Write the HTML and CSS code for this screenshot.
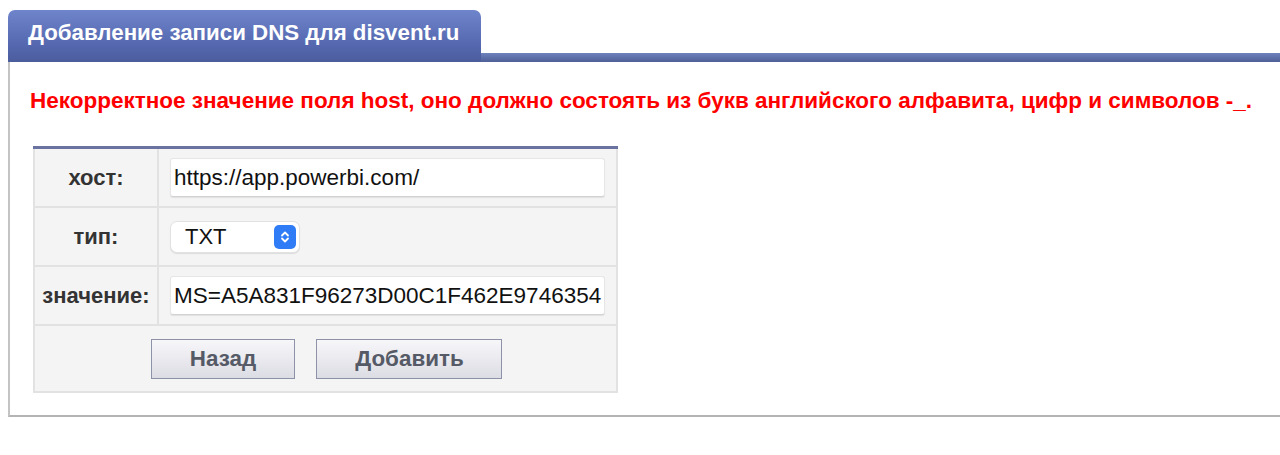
FILE: index.html
```html
<!DOCTYPE html>
<html lang="ru">
<head>
<meta charset="utf-8">
<title>Добавление записи DNS</title>
<link rel="stylesheet" href="styles.css">
</head>
<body>
<div class="tabs">
  <div class="tab">Добавление записи DNS для disvent.ru</div>
  <div class="tabline"></div>
</div>
<div class="panel">
  <p class="error">Некорректное значение поля host, оно должно состоять из букв английского алфавита, цифр и символов -_.</p>
  <table class="form">
    <tr>
      <th>хост:</th>
      <td><div class="input">https://app.powerbi.com/</div></td>
    </tr>
    <tr>
      <th>тип:</th>
      <td>
        <div class="select">
          <span>TXT</span>
          <span class="stepper">
            <svg width="12" height="16" viewBox="0 0 12 16"><path d="M3 6.5 L6 3.5 L9 6.5 M3 9.5 L6 12.5 L9 9.5" fill="none" stroke="#fff" stroke-width="1.8" stroke-linecap="round" stroke-linejoin="round"/></svg>
          </span>
        </div>
      </td>
    </tr>
    <tr>
      <th>значение:</th>
      <td><div class="input">MS=A5A831F96273D00C1F462E9746354</div></td>
    </tr>
    <tr>
      <td colspan="2" class="buttons">
        <button class="btn back">Назад</button>
        <button class="btn add">Добавить</button>
      </td>
    </tr>
  </table>
</div>
</body>
</html>
```
FILE: styles.css
```css
html, body {
  background: #fff;
}
body {
  margin: 10px 0 0 8px;
  font-family: "Liberation Sans", Arial, sans-serif;
  overflow: hidden;
}
.tabs {
  display: flex;
  align-items: flex-end;
}
.tab {
  height: 52px;
  box-sizing: border-box;
  padding: 10px 22px 0 20px;
  border-radius: 7px 7px 0 0;
  background: linear-gradient(#6e84cb, #5467ae 70%, #4b5d9c);
  color: #fff;
  font-weight: bold;
  font-size: 22.3px;
  white-space: nowrap;
}
.tabline {
  flex: 1;
  height: 9px;
  background: linear-gradient(#6f82bd, #4f5f97);
}
.panel {
  border-left: 2px solid #c4c4c4;
  border-bottom: 2px solid #b4b4b4;
  height: 355px;
  box-sizing: border-box;
  padding: 26px 0 0 20px;
}
.error {
  margin: 0 0 32px 0;
  color: #f00;
  font-weight: bold;
  font-size: 22.5px;
  line-height: 26px;
  white-space: nowrap;
}
.form {
  border-collapse: collapse;
  table-layout: fixed;
  width: 585px;
  margin-left: 3px;
  background: #f4f4f4;
  border-top: 3px solid #6a73a0;
  border-left: 1px solid #d6d6d6;
  border-right: 1px solid #d6d6d6;
  border-bottom: 1px solid #d6d6d6;
}
.form th, .form td {
  border: 2px solid #e2e2e2;
  padding: 0;
  height: 57px;
}
.form th {
  width: 122px;
  font-size: 22px;
  font-weight: bold;
  color: #333;
  text-align: center;
}
.form td {
  padding: 0 11px;
}
.input {
  height: 39px;
  box-sizing: border-box;
  background: #fff;
  border: 1px solid #e6e6e6;
  border-bottom-color: #d2d2d2;
  border-radius: 3px;
  box-shadow: 0 1px 1px rgba(0,0,0,0.08);
  font-family: Helvetica, "Liberation Sans", Arial, sans-serif;
  font-size: 22.5px;
  line-height: 37px;
  padding: 0 3px;
  color: #111;
  white-space: nowrap;
  overflow: hidden;
}
.select {
  display: flex;
  align-items: center;
  justify-content: space-between;
  width: 130px;
  height: 32px;
  box-sizing: border-box;
  background: #fff;
  border: 1px solid #e2e2e2;
  border-radius: 7px;
  box-shadow: 0 1px 1px rgba(0,0,0,0.1);
  padding: 0 3px 0 14px;
  font-size: 22px;
  color: #111;
}
.stepper {
  display: flex;
  align-items: center;
  justify-content: center;
  width: 22px;
  height: 24px;
  border-radius: 5px;
  background: #2f7cf6;
}
.form td.buttons {
  text-align: left;
  padding: 0 0 0 116px;
  height: 65px;
}
.btn {
  height: 40px;
  border: 1px solid #8d92a8;
  background: linear-gradient(#f7f7fa, #dcdce4);
  color: #555a66;
  font-family: "Liberation Sans", Arial, sans-serif;
  font-weight: bold;
  font-size: 22.4px;
  padding: 0;
  margin: 0;
  vertical-align: middle;
}
.back {
  width: 144px;
}
.add {
  width: 186px;
  margin-left: 17px;
}
```
